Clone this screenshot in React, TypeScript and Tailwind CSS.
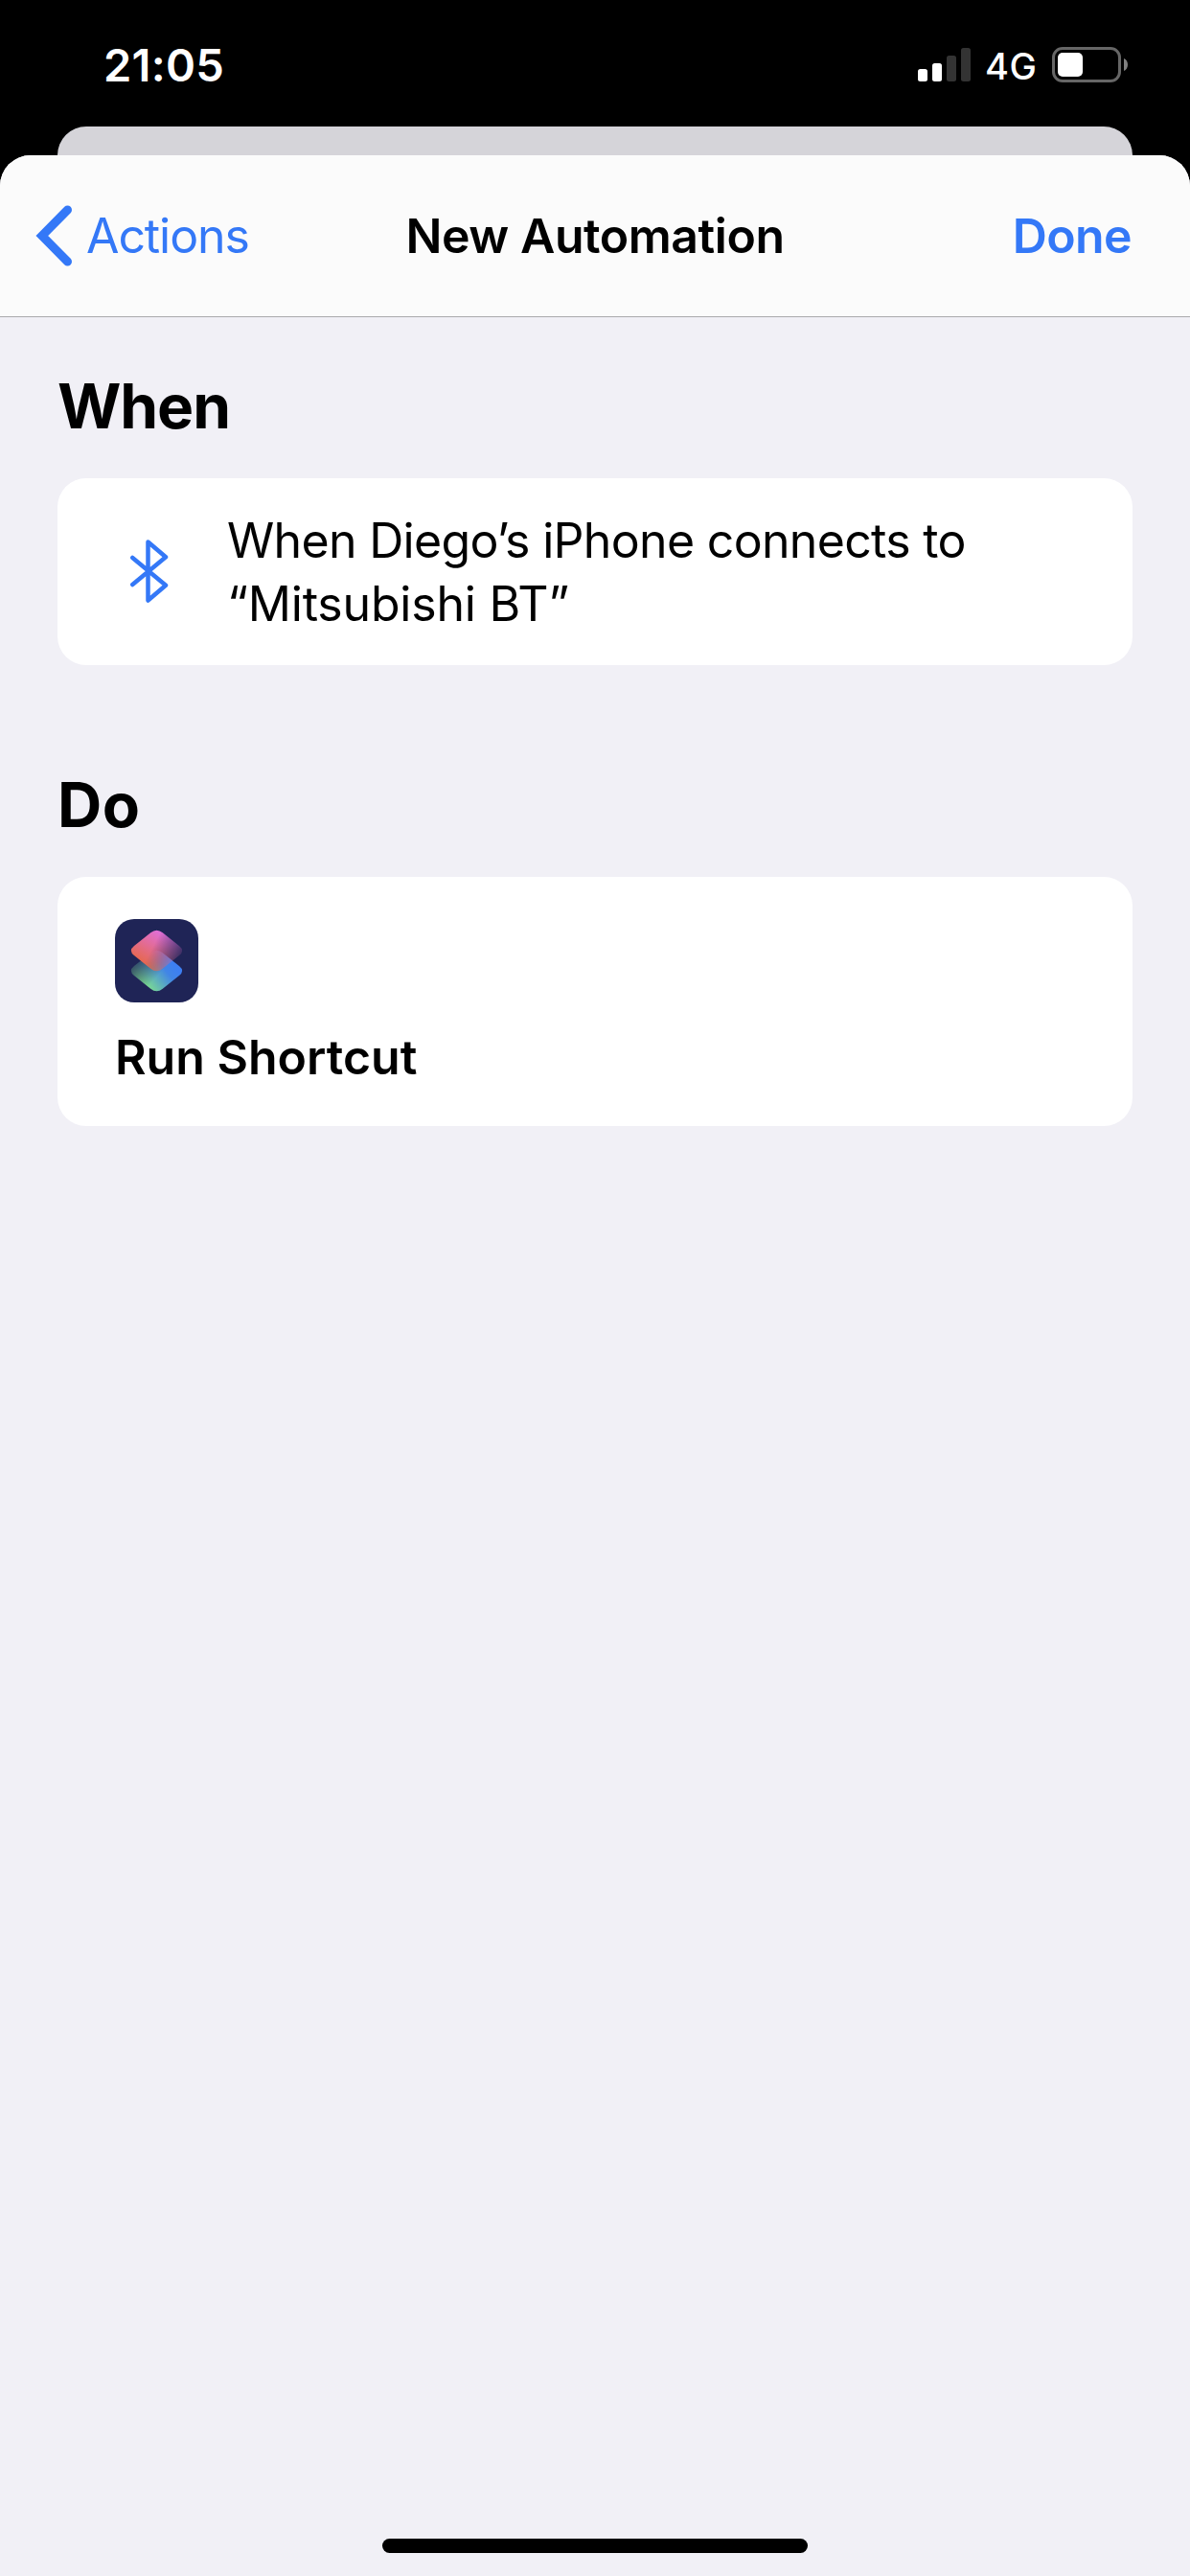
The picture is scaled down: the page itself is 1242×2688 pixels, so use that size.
import type { ReactNode } from 'react'

function SignalIcon() {
  return (
    <svg width="55" height="35" viewBox="0 0 55 35" aria-hidden="true">
      <rect x="0" y="22" width="10" height="13" rx="2.5" fill="#fff" />
      <rect x="15" y="16" width="10" height="19" rx="2.5" fill="#fff" />
      <rect x="30" y="8" width="10" height="27" rx="2.5" fill="#333" />
      <rect x="45" y="0" width="10" height="35" rx="2.5" fill="#333" />
    </svg>
  )
}

function BatteryIcon() {
  return (
    <svg width="79" height="37" viewBox="0 0 79 37" aria-hidden="true">
      <rect x="1.5" y="1.5" width="69" height="34" rx="9.5" fill="none" stroke="#666" strokeWidth="3" />
      <rect x="6" y="6" width="26" height="25" rx="5" fill="#fff" />
      <path d="M75 12c2.6 1 4 3.6 4 6.5s-1.4 5.5-4 6.5z" fill="#808080" />
    </svg>
  )
}

function BackChevron() {
  return (
    <svg width="40" height="68" viewBox="0 0 40 68" aria-hidden="true">
      <path d="M34.5 7 7.8 34l26.7 27" fill="none" stroke="#3478f7" strokeWidth="9" strokeLinecap="round" />
    </svg>
  )
}

function BluetoothIcon() {
  return (
    <svg width="40" height="69" viewBox="0 0 40 69" aria-hidden="true">
      <path
        d="M2.3 20 37 48.7 18.5 64.5v-61L37 19.3 2.3 48"
        fill="none"
        stroke="#3478f7"
        strokeWidth="4.5"
        strokeLinecap="round"
        strokeLinejoin="round"
      />
    </svg>
  )
}

const TILE =
  'M37.2 14.2Q43.5 9.2 49.8 14.2L67 28Q73.3 33 67 38L49.8 51.8Q43.5 56.8 37.2 51.8L20 38Q13.7 33 20 28Z'

function ShortcutsIcon() {
  return (
    <svg width="87" height="87" viewBox="0 0 87 87" aria-hidden="true">
      <defs>
        <linearGradient id="top" gradientUnits="userSpaceOnUse" x1="46" y1="13" x2="28" y2="44">
          <stop offset="0" stopColor="#df6fd6" />
          <stop offset="1" stopColor="#e66852" />
        </linearGradient>
        <linearGradient id="bottom" gradientUnits="userSpaceOnUse" x1="34" y1="49" x2="62" y2="27">
          <stop offset="0" stopColor="#79d894" />
          <stop offset="0.7" stopColor="#4185e6" />
          <stop offset="1" stopColor="#3d7ff2" />
        </linearGradient>
        <linearGradient id="topFade" gradientUnits="userSpaceOnUse" x1="39" y1="30" x2="64" y2="43">
          <stop offset="0" stopColor="#fff" />
          <stop offset="1" stopColor="#fff" stopOpacity="0.2" />
        </linearGradient>
        <linearGradient id="bottomFade" gradientUnits="userSpaceOnUse" x1="24" y1="25" x2="42" y2="41">
          <stop offset="0" stopColor="#fff" stopOpacity="0.3" />
          <stop offset="1" stopColor="#fff" />
        </linearGradient>
        <mask id="topMask" maskUnits="userSpaceOnUse" x="0" y="0" width="87" height="87">
          <rect width="87" height="87" fill="url(#topFade)" />
        </mask>
        <mask id="bottomMask" maskUnits="userSpaceOnUse" x="0" y="0" width="87" height="87">
          <rect width="87" height="87" fill="url(#bottomFade)" />
        </mask>
      </defs>
      <rect width="87" height="87" rx="20" fill="#1f2456" />
      <g transform="translate(0 21)">
        <path d={TILE} fill="url(#bottom)" mask="url(#bottomMask)" />
      </g>
      <path d={TILE} fill="url(#top)" mask="url(#topMask)" />
    </svg>
  )
}

function StatusBar() {
  return (
    <div className="flex h-[132px] items-center justify-between pt-[3px] pr-[65px] pl-[108px] text-white">
      <span className="text-[47px] leading-none font-semibold tracking-[0.3px]">21:05</span>
      <div className="flex items-center">
        <SignalIcon />
        <span className="ml-[15px] w-[54px] pt-[2px] text-[38px] leading-none font-medium tracking-[0.5px]">4G</span>
        <span className="ml-4">
          <BatteryIcon />
        </span>
      </div>
    </div>
  )
}

function Header() {
  return (
    <header className="grid h-[169px] grid-cols-[1fr_auto_1fr] items-center border-b border-[#a9a9ac] bg-[#fbfbfb] text-[50px] leading-[60px]">
      <button className="flex items-center gap-[14px] pl-9 text-[#3478f7]">
        <BackChevron />
        <span className="tracking-[-1.1px]">Actions</span>
      </button>
      <h1 className="font-semibold tracking-[-0.45px]">New Automation</h1>
      <button className="justify-self-end pr-[61px] font-semibold tracking-[-0.6px] text-[#3478f7]">Done</button>
    </header>
  )
}

function Section({ title, titleClass, children }: { title: string; titleClass: string; children: ReactNode }) {
  return (
    <section className="flex flex-col gap-[35px]">
      <h2 className={`text-[64px] leading-[80px] font-bold ${titleClass}`}>{title}</h2>
      {children}
    </section>
  )
}

export default function App() {
  return (
    <div className="flex h-[2688px] w-[1242px] flex-col overflow-hidden bg-black font-['Inter','Liberation_Sans',sans-serif] text-black">
      <StatusBar />
      {/* Edge of the sheet underneath */}
      <div className="-mb-8 h-[62px] shrink-0 px-[60px]">
        <div className="h-[30px] rounded-t-[30px] bg-[#d5d4d9]" />
      </div>
      <div className="flex flex-1 flex-col overflow-hidden rounded-t-[32px] bg-[#f1f0f6]">
        <Header />
        <main className="flex flex-1 flex-col gap-[106px] px-[60px] pt-[53px]">
          <Section title="When" titleClass="tracking-[-1.07px]">
            <div className="flex h-[195px] items-center rounded-[30px] bg-white pl-[76px]">
              <BluetoothIcon />
              <p className="ml-[61px] text-[50px] leading-[66px]">
                <span className="block tracking-[-0.68px]">When Diego’s iPhone connects to</span>
                <span className="block tracking-[-0.2px]">“Mitsubishi BT”</span>
              </p>
            </div>
          </Section>
          <Section title="Do" titleClass="tracking-[0.5px]">
            <div className="flex h-[260px] flex-col gap-[27px] rounded-[30px] bg-white px-[60px] pt-11">
              <ShortcutsIcon />
              <p className="text-[50px] leading-[60px] font-semibold">Run Shortcut</p>
            </div>
          </Section>
        </main>
        <div className="mx-auto mb-6 h-[15px] w-[444px] rounded-full bg-black" />
      </div>
    </div>
  )
}
